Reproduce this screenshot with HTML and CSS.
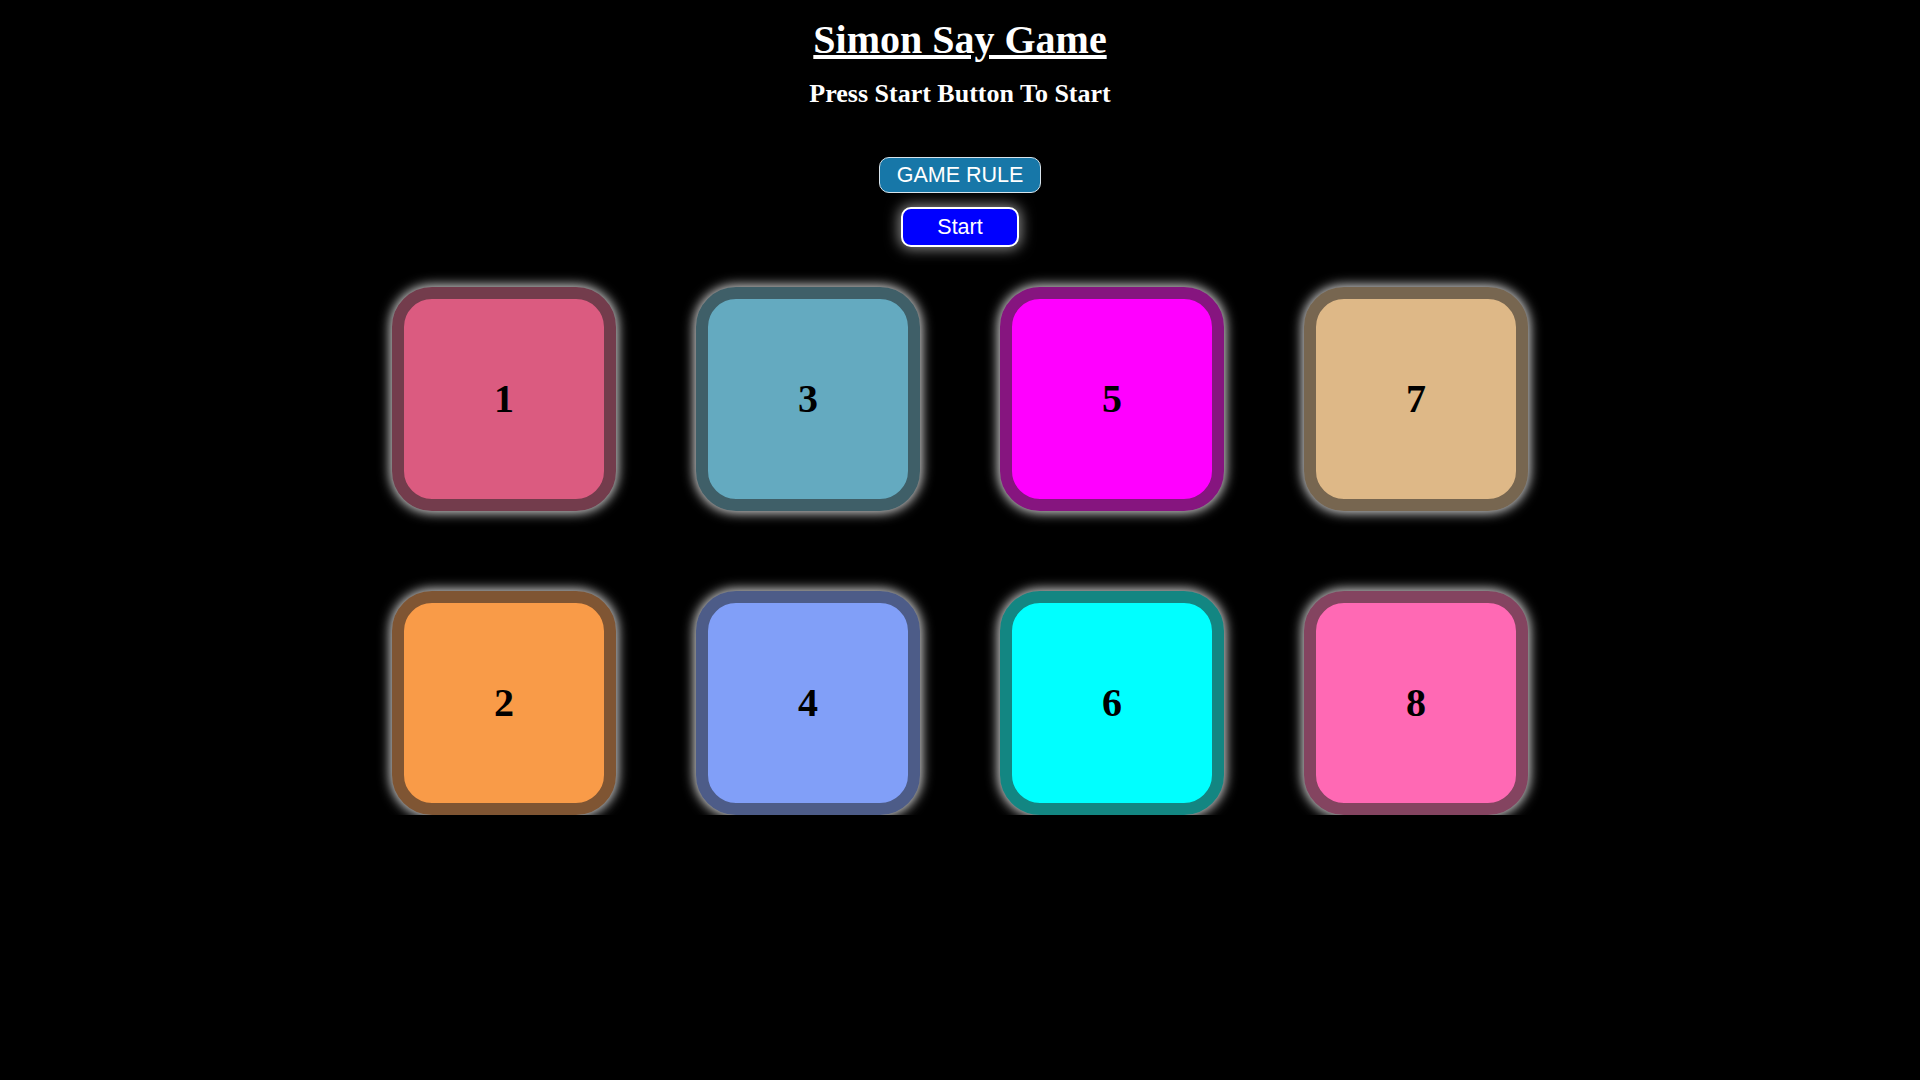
FILE: index.html
```html
<!DOCTYPE html>
<html lang="en">
<head>
<meta charset="UTF-8">
<title>Simon Say Game</title>
<link rel="stylesheet" href="styles.css">
</head>
<body>
  <main class="page">
    <h1 class="title">Simon Say Game</h1>
    <h2 class="subtitle">Press Start Button To Start</h2>
    <button class="btn btn-rule">GAME RULE</button>
    <button class="btn btn-start">Start</button>
    <div class="board">
      <div class="tile c1">1</div>
      <div class="tile c3">3</div>
      <div class="tile c5">5</div>
      <div class="tile c7">7</div>
      <div class="tile c2">2</div>
      <div class="tile c4">4</div>
      <div class="tile c6">6</div>
      <div class="tile c8">8</div>
    </div>
  </main>
</body>
</html>
```
FILE: styles.css
```css
html, body {
  margin: 0;
  padding: 0;
  background: #000;
  color: #fff;
  font-family: "Liberation Serif", "Times New Roman", serif;
}

.page {
  display: flex;
  flex-direction: column;
  align-items: center;
  padding-top: 17px;
}

.title {
  margin: 0;
  font-size: 40px;
  font-weight: bold;
  text-decoration: underline;
  line-height: 46px;
}

.subtitle {
  margin: 16px 0 0;
  font-size: 26px;
  font-weight: bold;
  line-height: 30px;
}

.btn {
  box-sizing: border-box;
  font-family: "Liberation Sans", Arial, sans-serif;
  font-size: 21.5px;
  color: #fff;
  padding: 0;
  cursor: pointer;
}

.btn-rule {
  margin-top: 48px;
  width: 162px;
  height: 36px;
  background: #1777a8;
  border: 1px solid #d8e4ec;
  border-radius: 10px;
}

.btn-start {
  margin-top: 14px;
  width: 118px;
  height: 40px;
  background: #0000ff;
  border: 2px solid #fff;
  border-radius: 10px;
  box-shadow: 0 0 14px 2px rgba(255, 255, 255, 0.55);
}

.board {
  margin-top: 40px;
  display: grid;
  grid-template-columns: repeat(4, 224px);
  grid-auto-rows: 224px;
  column-gap: 80px;
  row-gap: 80px;
}

.tile {
  box-sizing: border-box;
  display: flex;
  align-items: center;
  justify-content: center;
  padding-bottom: 2px;
  border: 12px solid;
  border-radius: 40px;
  box-shadow: 0 0 12px 2px rgba(255, 255, 255, 0.85);
  color: #000;
  font-family: "Liberation Serif", "Times New Roman", serif;
  font-size: 40px;
  font-weight: bold;
}

.c1 { background: #db5b80; border-color: #733c4c; }
.c2 { background: #f99b48; border-color: #7f5533; }
.c3 { background: #64aac0; border-color: #3f5f68; }
.c4 { background: #819ff8; border-color: #4d5c88; }
.c5 { background: #ff00ff; border-color: #86157f; }
.c6 { background: #00ffff; border-color: #138682; }
.c7 { background: #deb887; border-color: #776650; }
.c8 { background: #ff69b4; border-color: #844460; }
```
